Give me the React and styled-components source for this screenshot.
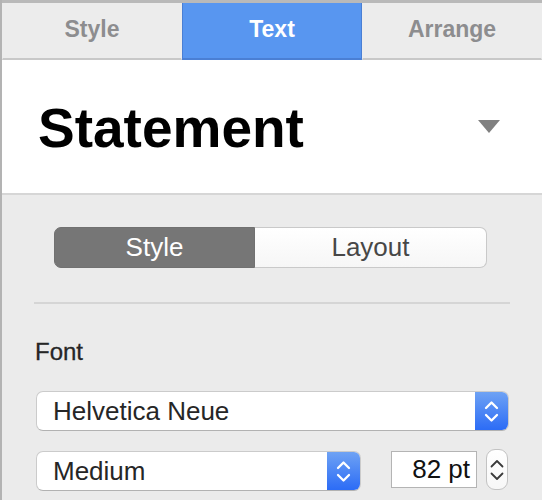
import React from "react";
import styled, { createGlobalStyle } from "styled-components";

const Global = createGlobalStyle`
  html, body { margin: 0; padding: 0; background: #ececec; }
  body { font-family: "Liberation Sans", Arial, sans-serif; }
`;

const Panel = styled.div`
  width: 542px;
  height: 500px;
  box-sizing: border-box;
  border-left: 2px solid #b3b3b3;
  background: #ebebeb;
  overflow: hidden;
`;

const TabBar = styled.div`
  display: grid;
  grid-template-columns: repeat(3, 1fr);
  height: 60px;
  box-sizing: border-box;
  border-top: 3px solid #b9b9b9;
  background: #ececec;
`;

const Tab = styled.div`
  display: flex;
  align-items: center;
  justify-content: center;
  padding-bottom: 3px;
  font-size: 23px;
  font-weight: 700;
  color: ${(p) => (p.$active ? "#ffffff" : "#8d8d8f")};
  background: ${(p) => (p.$active ? "#5896f0" : "transparent")};
  border-bottom: 2px solid ${(p) => (p.$active ? "#4a7fd4" : "#c8c8c8")};
  border-left: 1px solid ${(p) => (p.$active ? "#4a7fd4" : "transparent")};
  border-right: 1px solid ${(p) => (p.$active ? "#4a7fd4" : "transparent")};
`;

const Header = styled.div`
  height: 135px;
  box-sizing: border-box;
  display: flex;
  align-items: center;
  justify-content: space-between;
  padding: 0 42px 0 36px;
  background: #ffffff;
  border-bottom: 2px solid #d6d6d6;
`;

const Title = styled.div`
  font-size: 55px;
  font-weight: 700;
  line-height: 55px;
  color: #000;
  padding-top: 4px;
`;

const Body = styled.div`
  display: flex;
  flex-direction: column;
  padding: 0 32px;
`;

const Segmented = styled.div`
  display: flex;
  width: 433px;
  height: 41px;
  margin: 32px 0 0 20px;
`;

const Segment = styled.div`
  display: flex;
  align-items: center;
  justify-content: center;
  box-sizing: border-box;
  font-size: 26px;
  width: ${(p) => p.$w}px;
  color: ${(p) => (p.$on ? "#ffffff" : "#474747")};
  background: ${(p) =>
    p.$on ? "#767676" : "linear-gradient(#ffffff, #f6f6f6)"};
  border: 1px solid ${(p) => (p.$on ? "#717171" : "#c9c9c9")};
  border-left-width: ${(p) => (p.$on ? "1px" : "0")};
  border-radius: ${(p) => (p.$on ? "7px 0 0 7px" : "0 7px 7px 0")};
`;

const Divider = styled.div`
  height: 2px;
  background: #d5d5d5;
  margin-top: 34px;
`;

const Label = styled.div`
  font-size: 24px;
  line-height: 24px;
  font-weight: 500;
  color: #262626;
  margin: 36px 0 0 1px;
  -webkit-text-stroke: 0.3px #262626;
`;

const Popup = styled.div`
  display: flex;
  box-sizing: border-box;
  height: 40px;
  width: ${(p) => p.$w}px;
  margin-left: 2px;
  margin-top: ${(p) => p.$top}px;
  background: #ffffff;
  border: 1px solid #cbcbcb;
  border-bottom-color: #b2b2b2;
  border-radius: 7px;
  overflow: hidden;
`;

const PopupText = styled.div`
  flex: 1;
  display: flex;
  align-items: center;
  padding-left: 16px;
  font-size: 26px;
  color: #262626;
`;

const Arrows = styled.div`
  width: 33px;
  display: flex;
  align-items: center;
  justify-content: center;
  background: linear-gradient(#6ea2f4, #2c6cf6);
`;

const Row = styled.div`
  display: flex;
  align-items: flex-start;
  margin-top: 18px;
`;

const SizeField = styled.div`
  box-sizing: border-box;
  width: 86px;
  height: 37px;
  margin: 2px 0 0 30px;
  border: 1px solid #b4b4b4;
  background: #ffffff;
  display: flex;
  align-items: center;
  justify-content: flex-end;
  padding-right: 6px;
  font-size: 26px;
  color: #111;
`;

const Stepper = styled.div`
  box-sizing: border-box;
  width: 22px;
  height: 41px;
  margin-left: 9px;
  border: 1px solid #c3c3c3;
  border-radius: 9px;
  background: linear-gradient(#ffffff, #f7f7f7);
  display: flex;
  align-items: center;
  justify-content: center;
`;

const Chevrons = ({ color, w, h, width }) => {
  const cx = w / 2;
  const mid = h / 2;
  return (
    <svg width={w} height={h} viewBox={`0 0 ${w} ${h}`}>
      <g fill="none" stroke={color} strokeWidth={width} strokeLinecap="round" strokeLinejoin="round">
        <polyline points={`${cx - 5.5},${mid - 3} ${cx},${mid - 8.5} ${cx + 5.5},${mid - 3}`} />
        <polyline points={`${cx - 5.5},${mid + 4} ${cx},${mid + 9.5} ${cx + 5.5},${mid + 4}`} />
      </g>
    </svg>
  );
};

const Caret = () => (
  <svg width="22" height="13" viewBox="0 0 22 13">
    <polygon points="0,0 22,0 11,13" fill="#808080" />
  </svg>
);

export default function App() {
  return (
    <>
      <Global />
      <Panel>
        <TabBar>
          <Tab>Style</Tab>
          <Tab $active>Text</Tab>
          <Tab>Arrange</Tab>
        </TabBar>
        <Header>
          <Title>Statement</Title>
          <Caret />
        </Header>
        <Body>
          <Segmented>
            <Segment $on $w={201}>Style</Segment>
            <Segment $w={232}>Layout</Segment>
          </Segmented>
          <Divider />
          <Label>Font</Label>
          <Popup $w={473} $top={27}>
            <PopupText>Helvetica Neue</PopupText>
            <Arrows>
              <Chevrons color="#ffffff" w={33} h={38} width={2.3} />
            </Arrows>
          </Popup>
          <Row>
            <Popup $w={325} $top={2}>
              <PopupText>Medium</PopupText>
              <Arrows>
                <Chevrons color="#ffffff" w={33} h={38} width={2.3} />
              </Arrows>
            </Popup>
            <SizeField>82 pt</SizeField>
            <Stepper>
              <Chevrons color="#3a3a3a" w={20} h={39} width={1.8} />
            </Stepper>
          </Row>
        </Body>
      </Panel>
    </>
  );
}
